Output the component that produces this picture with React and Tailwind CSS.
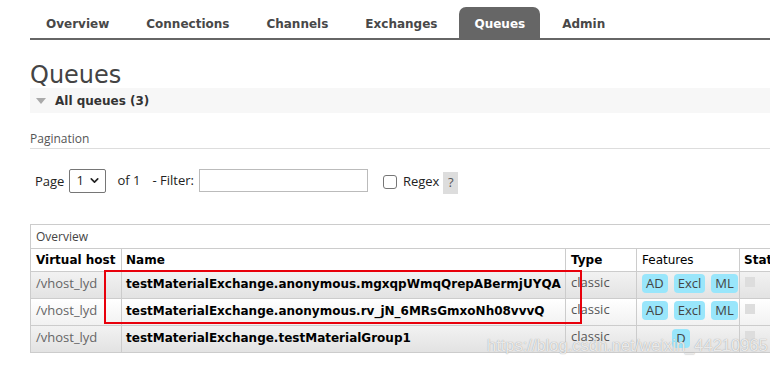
import { ChevronDown } from 'lucide-react';

const verdana = { fontFamily: '"DejaVu Sans", Verdana, sans-serif' };

const tabs = ['Overview', 'Connections', 'Channels', 'Exchanges', 'Queues', 'Admin'];

const rows = [
    { vhost: '/vhost_lyd', name: 'testMaterialExchange.anonymous.mgxqpWmqQrepABermjUYQA', features: ['AD', 'Excl', 'ML'], bg: 'bg-gradient-to-b from-[#f2f2f2] to-[#e2e2e2]' },
    { vhost: '/vhost_lyd', name: 'testMaterialExchange.anonymous.rv_jN_6MRsGmxoNh08vvvQ', features: ['AD', 'Excl', 'ML'], bg: 'bg-gradient-to-b from-[#ffffff] to-[#f1f1f1]' },
    { vhost: '/vhost_lyd', name: 'testMaterialExchange.testMaterialGroup1', features: ['D'], bg: 'bg-gradient-to-b from-[#f2f2f2] to-[#e2e2e2]' },
];

function Badge({ label }) {
    return (
        <span className="inline-block rounded-[4px] bg-[#99e6fb] px-[4px] leading-[19px] text-[13px] text-[#444]">
            {label}
        </span>
    );
}

export default function App() {
    return (
        <div className="relative w-[770px] h-[366px] overflow-hidden bg-white pl-[30px] font-['Open_Sans',sans-serif]">
            {/* Nav tabs */}
            <div className="flex h-[40px] items-end border-b-2 border-[#666] pt-[7px]" style={verdana}>
                {tabs.map((t) => (
                    <div
                        key={t}
                        className={
                            t === 'Queues'
                                ? 'mr-[7px] flex h-full items-center rounded-t-[7px] bg-[#666] px-[15px] pt-[2px] text-[12px] font-bold text-white'
                                : 'mr-[7px] flex h-full items-center px-[15px] pt-[2px] text-[12px] font-bold text-[#484848] first:ml-px'
                        }
                    >
                        {t}
                    </div>
                ))}
            </div>

            <h1 className="mt-[21px] text-[24px] leading-[28px] text-[#444]" style={verdana}>Queues</h1>

            <div className="mt-[-1px] flex h-[25px] items-center bg-[#f7f7f7] pl-[6px]" style={verdana}>
                <span className="h-0 w-0 border-x-[5px] border-t-[6px] border-x-transparent border-t-[#aaa]"></span>
                <span className="ml-[9px] text-[12px] font-bold text-[#333]">All queues (3)</span>
            </div>

            <div className="mt-[17px] border-b border-[#ddd] pb-[1px] text-[12px] leading-[17px] text-[#555]">Pagination</div>

            <div className="mt-[18px] flex items-center pl-[5px] text-[13px] text-[#222]">
                <span className="mt-[3px]">Page</span>
                <div className="ml-[5px] flex h-[24px] w-[37px] items-center justify-between rounded-[2px] border border-[#767676] pl-[6px] pr-[4px]">
                    <span>1</span>
                    <ChevronDown size={13} strokeWidth={3} />
                </div>
                <span className="ml-[11px]">of 1</span>
                <span className="ml-[12px]">- Filter:</span>
                <div className="ml-[5px] h-[23px] w-[169px] border border-[#bbb]"></div>
                <div className="ml-[15px] mt-[3px] h-[14px] w-[14px] rounded-[3px] border border-[#767676]"></div>
                <span className="ml-[6px] mt-[3px]">Regex</span>
                <span className="ml-[4px] mt-[5px] flex h-[22px] w-[15px] items-center justify-center bg-[#ddd] text-[#555]">?</span>
            </div>

            {/* Table */}
            <table className="mt-[30px] w-[800px] table-fixed border-collapse text-[12px]">
                <colgroup>
                    <col className="w-[91px]" />
                    <col className="w-[444px]" />
                    <col className="w-[71px]" />
                    <col className="w-[103px]" />
                    <col className="w-[91px]" />
                </colgroup>
                <thead>
                    <tr>
                        <th colSpan={5} className="h-[24px] border border-[#ccc] pl-[5px] text-left font-normal text-[#444]">Overview</th>
                    </tr>
                    <tr className="h-[23px]" style={verdana}>
                        <th className="border border-[#ccc] pl-[5px] text-left font-bold text-black">Virtual host</th>
                        <th className="border border-[#ccc] pl-[4px] text-left font-bold text-black">Name</th>
                        <th className="border border-[#ccc] pl-[5px] text-left font-bold text-black">Type</th>
                        <th className="border border-[#ccc] pl-[5px] text-left font-normal text-black">Features</th>
                        <th className="border border-[#ccc] pl-[4px] text-left font-bold text-black">State</th>
                    </tr>
                </thead>
                <tbody>
                    {rows.map((r, i) => (
                        <tr key={i} className={`h-[27px] ${r.bg}`}>
                            <td className="border border-[#ccc] pl-[5px] align-top pt-[2px] text-[#666] text-[13px]">{r.vhost}</td>
                            <td className="border border-[#ccc] pl-[4px] align-top pt-[3px] font-bold text-black whitespace-nowrap" style={verdana}>{r.name}</td>
                            <td className="border border-[#ccc] pl-[5px] align-top pt-px text-[13px] text-[#555]">{r.type || 'classic'}</td>
                            <td className={`border border-[#ccc] align-top pt-[2px] ${r.features.length === 1 ? 'text-center pr-[14px]' : 'pl-[5px]'}`}>
                                <div className={`flex gap-[6px] ${r.features.length === 1 ? 'justify-center pt-[1px]' : ''}`}>
                                    {r.features.map((f) => <Badge key={f} label={f} />)}
                                </div>
                            </td>
                            <td className="border border-[#ccc] pl-[5px] align-top pt-[5px]">
                                <div className="h-[10px] w-[10px] bg-[#ddd]"></div>
                            </td>
                        </tr>
                    ))}
                </tbody>
            </table>

            {/* Red highlight box */}
            <div className="pointer-events-none absolute left-[104px] top-[270px] h-[54px] w-[478px] border-2 border-[#e8000b]"></div>

            {/* Watermark */}
            <div className="pointer-events-none absolute left-[487px] top-[333px] font-['Liberation_Sans',Arial,sans-serif] text-[16.5px] text-white/80 [text-shadow:0_0_1px_#888]">
                https://blog.csdn.net/weixin_44210965
            </div>
        </div>
    );
}
